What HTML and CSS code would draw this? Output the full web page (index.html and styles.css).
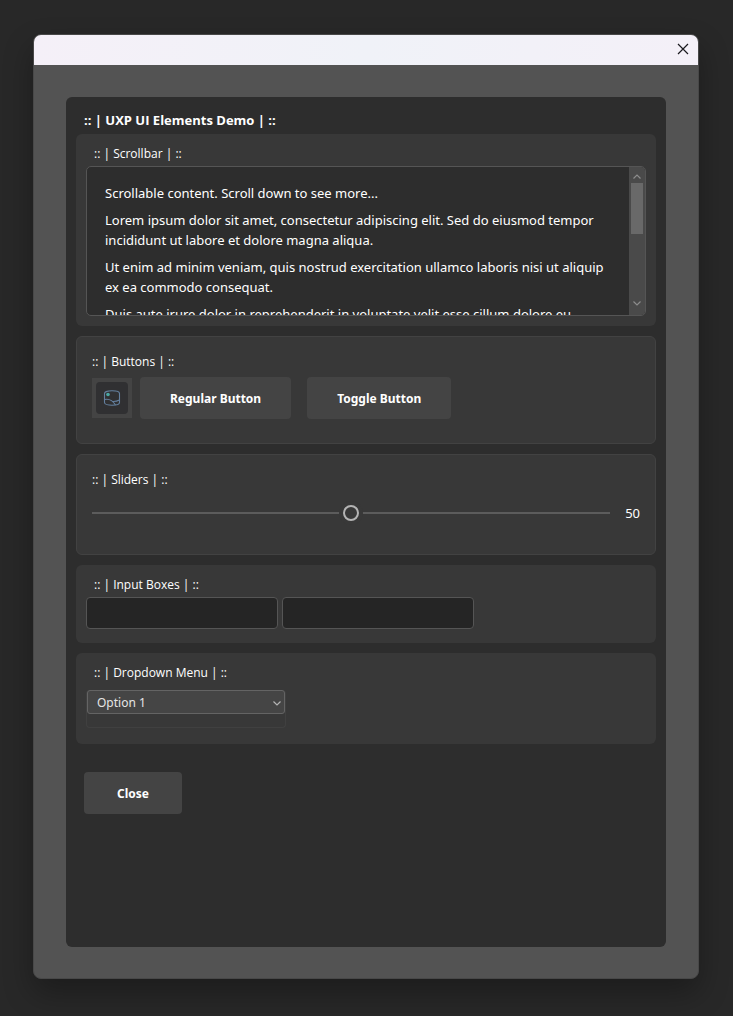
FILE: index.html
```html
<!DOCTYPE html>
<html lang="en">
<head>
    <meta charset="UTF-8">
    <meta name="viewport" content="width=device-width, initial-scale=1.0">
    <title>UXP UI Elements Demo</title>
    <link rel="stylesheet" href="styles.css">
</head>
<body>
    <div class="window">
        <!-- Title bar -->
        <header class="title-bar">
            <button class="window-close" aria-label="Close window">
                <svg width="12" height="12" viewBox="0 0 12 12">
                    <path d="M1 1 L11 11 M11 1 L1 11" fill="none" stroke="#1b1a1f" stroke-width="1.2"/>
                </svg>
            </button>
        </header>

        <main class="window-body">
            <div class="panel">
                <h1>:: | UXP UI Elements Demo | ::</h1>

                <!-- Scrollbar -->
                <section class="section">
                    <h2>:: | Scrollbar | ::</h2>
                    <div class="scroll-box">
                        <div class="scroll-content" tabindex="0">
                            <p>Scrollable content. Scroll down to see more...</p>
                            <p>Lorem ipsum dolor sit amet, consectetur adipiscing elit. Sed do eiusmod tempor incididunt ut labore et dolore magna aliqua.</p>
                            <p>Ut enim ad minim veniam, quis nostrud exercitation ullamco laboris nisi ut aliquip ex ea commodo consequat.</p>
                            <p>Duis aute irure dolor in reprehenderit in voluptate velit esse cillum dolore eu</p>
                        </div>
                        <div class="scrollbar">
                            <svg width="8" height="5" viewBox="0 0 8 5">
                                <path d="M0.5 4.5 L4 1 L7.5 4.5" fill="none" stroke="#8c8c8c" stroke-width="1.2"/>
                            </svg>
                            <div class="scroll-track">
                                <div class="scroll-thumb"></div>
                            </div>
                            <svg width="8" height="5" viewBox="0 0 8 5">
                                <path d="M0.5 0.5 L4 4 L7.5 0.5" fill="none" stroke="#8c8c8c" stroke-width="1.2"/>
                            </svg>
                        </div>
                    </div>
                </section>

                <!-- Buttons -->
                <section class="section bordered">
                    <h2>:: | Buttons | ::</h2>
                    <div class="button-row">
                        <button class="icon-button" aria-label="Image">
                            <span class="icon-tile">
                                <svg width="18" height="18" viewBox="0 0 18 18" fill="none" stroke="#64809f" stroke-width="1.1">
                                    <path d="M1.5 4.5 C1.5 0.8 16.5 0.8 16.5 4.5 V13.5 C16.5 17.2 1.5 17.2 1.5 13.5 Z"/>
                                    <path d="M1.5 10.5 C6 9.5 10 12 12.5 16 M9.5 12.5 Q13 12.8 16.5 11"/>
                                    <circle cx="5" cy="5.5" r="1.8" fill="#4aa8a4" stroke="none"/>
                                </svg>
                            </span>
                        </button>
                        <button class="btn">Regular Button</button>
                        <button class="btn">Toggle Button</button>
                    </div>
                </section>

                <!-- Sliders -->
                <section class="section bordered">
                    <h2><label for="slider">:: | Sliders | ::</label></h2>
                    <div class="slider-row">
                        <input type="range" id="slider" min="0" max="100" value="50">
                        <output for="slider">50</output>
                    </div>
                </section>

                <!-- Input boxes -->
                <section class="section inputs">
                    <h2>:: | Input Boxes | ::</h2>
                    <div class="input-row">
                        <input type="text" aria-label="First input">
                        <input type="text" aria-label="Second input">
                    </div>
                </section>

                <!-- Dropdown -->
                <section class="section dropdown">
                    <h2><label for="dropdown">:: | Dropdown Menu | ::</label></h2>
                    <div class="select-box">
                        <select id="dropdown">
                            <option>Option 1</option>
                            <option>Option 2</option>
                            <option>Option 3</option>
                        </select>
                        <svg class="select-arrow" width="8" height="5" viewBox="0 0 8 5">
                            <path d="M0.5 0.5 L4 4 L7.5 0.5" fill="none" stroke="#b4b4b4" stroke-width="1.2"/>
                        </svg>
                    </div>
                </section>

                <button class="btn close-button">Close</button>
            </div>
        </main>
    </div>
</body>
</html>
```
FILE: styles.css
```css
* {
    box-sizing: border-box;
}

body {
    display: flex;
    min-height: 100vh;
    margin: 0;
    padding: 34px 34px 37px 33px;
    background: #282828;
    color: #ffffff;
    font-family: "Noto Sans", "Open Sans", sans-serif;
}

h1, h2, p {
    margin: 0;
}

button, input, select {
    margin: 0;
    font-family: inherit;
    color: inherit;
}

/* Window */
.window {
    display: flex;
    flex-direction: column;
    flex: 1;
    min-width: 0;
    border: 1px solid #484848;
    border-radius: 8px;
    background: #535353;
    box-shadow: 0 14px 30px rgba(0, 0, 0, 0.3);
    overflow: hidden;
}

.title-bar {
    display: flex;
    justify-content: flex-end;
    height: 30px;
    background: linear-gradient(90deg, #f5f0f8, #f0f2f8 50%, #f4f0f8);
}

.window-close {
    display: flex;
    align-items: center;
    justify-content: center;
    width: 30px;
    height: 28px;
    padding: 0;
    border: none;
    background: none;
}

.window-body {
    display: flex;
    flex: 1;
    padding: 32px 32px 31px;
}

.panel {
    flex: 1;
    min-width: 0;
    padding: 10px;
    border-radius: 6px;
    background: #2d2d2d;
}

.panel h1 {
    padding: 0 8px;
    margin-bottom: 1px;
    font-family: "Open Sans", sans-serif;
    font-size: 13px;
    font-weight: 700;
    line-height: 26px;
}

/* Sections */
.section {
    margin-bottom: 10px;
    padding: 10px;
    border-radius: 6px;
    background: #383838;
}

.section h2 {
    padding: 0 8px;
    font-family: "Open Sans", sans-serif;
    font-size: 12px;
    font-weight: 400;
    line-height: 20px;
}

.section.bordered {
    padding: 15px;
    border: 1px solid #424242;
}

.section.bordered h2 {
    padding: 0;
}

/* Scroll area */
.scroll-box {
    display: flex;
    height: 150px;
    margin-top: 2px;
    border: 1px solid #555555;
    border-radius: 5px;
    background: #2d2d2d;
    overflow: hidden;
}

.scroll-content {
    flex: 1;
    padding: 16px 18px;
    overflow-y: scroll;
    scrollbar-width: none;
    font-size: 13px;
    line-height: 20px;
}

.scroll-content p {
    margin-bottom: 7px;
}

.scrollbar {
    display: flex;
    flex-direction: column;
    align-items: center;
    width: 16px;
    padding: 7px 0 9px;
    background: #4a4a4a;
}

.scroll-track {
    flex: 1;
    padding: 4px 0;
}

.scroll-thumb {
    width: 12px;
    height: 51px;
    background: #696969;
}

/* Buttons */
.button-row {
    display: flex;
    align-items: center;
    padding: 5px 0 9px;
}

.icon-button {
    width: 40px;
    height: 40px;
    margin-right: 8px;
    padding: 4px;
    border: none;
    background: #444444;
}

.icon-tile {
    display: flex;
    align-items: center;
    justify-content: center;
    height: 32px;
    border-radius: 4px;
    background: #303032;
}

.btn {
    height: 42px;
    margin-right: 16px;
    padding: 0 30px;
    border: none;
    border-radius: 4px;
    background: #444444;
    font-size: 12px;
    font-weight: 700;
}

/* Slider */
.slider-row {
    display: flex;
    align-items: center;
    gap: 15px;
    padding: 13px 0 16px;
}

.slider-row input {
    flex: 1;
    min-width: 0;
    height: 20px;
    appearance: none;
    background: linear-gradient(#5c5c5c, #5c5c5c) center / 100% 2px no-repeat;
}

.slider-row input::-webkit-slider-thumb {
    appearance: none;
    width: 16px;
    height: 16px;
    border: 2px solid #b4b4b4;
    border-radius: 50%;
    background: #383838;
    box-shadow: 0 0 0 4px #383838;
}

.slider-row output {
    font-size: 13px;
    line-height: 20px;
}

/* Input boxes */
.inputs {
    padding-bottom: 14px;
}

.input-row {
    display: flex;
    gap: 4px;
    margin-top: 2px;
}

.input-row input {
    width: 192px;
    min-width: 0;
    height: 32px;
    padding: 0 8px;
    border: 1px solid #555555;
    border-radius: 4px;
    background: #252525;
}

/* Dropdown */
.dropdown {
    padding-bottom: 16px;
}

.select-box {
    position: relative;
    width: 200px;
    height: 38px;
    margin-top: 7px;
    border: 1px solid #404040;
    border-top: none;
    border-radius: 4px;
}

.select-box select {
    display: block;
    width: 100%;
    height: 24px;
    padding: 0 9px;
    appearance: none;
    border: 1px solid #646464;
    border-radius: 3px;
    background: #454545;
    color: #e6e6e6;
    font-size: 12px;
}

.select-arrow {
    position: absolute;
    top: 11px;
    right: 4px;
    pointer-events: none;
}

.close-button {
    margin: 18px 8px;
    padding: 0 33px;
}
```
